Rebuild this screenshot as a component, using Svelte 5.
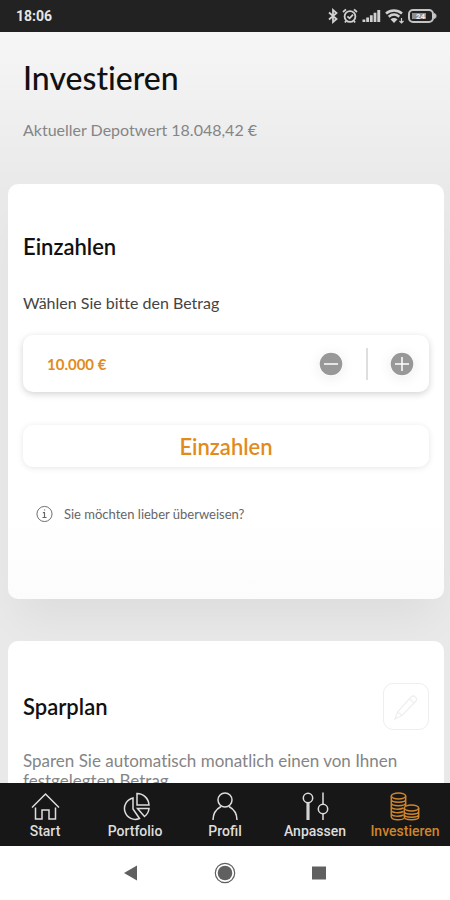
<script lang="ts">
  let amount = $state(10000);

  const tabs = ["Start", "Portfolio", "Profil", "Anpassen", "Investieren"];
  let active = $state("Investieren");

  const format = (n: number) =>
    String(n).replace(/\B(?=(\d{3})+$)/g, ".") + " €";

  function step(by: number) {
    amount = Math.max(0, amount + by);
  }

  function parse(e: Event) {
    const field = e.currentTarget as HTMLInputElement;
    amount = Number(field.value.replace(/\D/g, ""));
    field.value = format(amount);
  }
</script>

<div class="app">
  <header class="status">
    <span>18:06</span>
    <div class="status-icons">
      <svg width="10" height="16" viewBox="0 0 10 16" fill="none" stroke="#d0d0d0" stroke-width="1.8">
        <path d="M1 4.5 8.5 11 5 14v-12L8.500 5 1 11.5" />
      </svg>
      <svg width="16" height="16" viewBox="0 0 16 16" fill="none" stroke="#d0d0d0" stroke-width="1.8">
        <circle cx="8" cy="8.5" r="5.4" />
        <path d="M1 4 4 1.400M15 4l-3-2.600M5.400 8.300l2.200 2 3.400-3.600M4 13l-1 1.600M12 13l1 1.600" />
      </svg>
      <svg width="19" height="14" viewBox="0 0 19 14" fill="#d0d0d0">
        <path d="M.5 10.500h2.800V13H.5zM4.200 8.500H7V13H4.200zM7.900 6.200h2.800V13H7.900zM11.600 3.700h2.800V13h-2.800zM15.300 1h2.900v12h-2.900z" />
      </svg>
      <svg width="19" height="16" viewBox="0 0 19 16" fill="none" stroke="#d0d0d0" stroke-width="2.500">
        <path d="M1 5.500c4.700-4 11.300-4 16 0M3.700 8.700c3.300-2.700 7.300-2.700 10.600 0" />
        <path d="M5.500 11.300c2.300-1.700 4.700-1.700 7 0L9 15z" fill="#d0d0d0" stroke="none" />
        <path d="M16.500 10v5M14.500 13l2 2 2-2" stroke-width="1.200" />
      </svg>
      <svg width="29" height="14" viewBox="0 0 29 14">
        <rect x="1" y="1" width="24" height="12" rx="4" fill="none" stroke="#c4c4c4" stroke-width="2" />
        <path d="M26.500 4.500c2 .5 2 4.500 0 5z" fill="#c4c4c4" stroke="#c4c4c4" />
        <rect x="4" y="4" width="14" height="6" fill="#8c8c8c" />
        <text x="8" y="10">24</text>
      </svg>
    </div>
  </header>

  <main>
    <div class="intro">
      <h1>Investieren</h1>
      <p>Aktueller Depotwert 18.048,42 €</p>
    </div>

    <section class="card deposit">
      <h2>Einzahlen</h2>
      <label for="amount">Wählen Sie bitte den Betrag</label>
      <div class="amount">
        <input id="amount" type="text" inputmode="numeric" value={format(amount)} onchange={parse} />
        <button class="step" aria-label="Betrag verringern" onclick={() => step(-500)}>
          <svg width="24" height="24" viewBox="0 0 24 24">
            <circle cx="12" cy="12" r="11.300" fill="#989898" />
            <path d="M5 12h14" stroke="#fff" stroke-width="1.500" />
          </svg>
        </button>
        <span class="divider"></span>
        <button class="step" aria-label="Betrag erhöhen" onclick={() => step(500)}>
          <svg width="24" height="24" viewBox="0 0 24 24">
            <circle cx="12" cy="12" r="11.300" fill="#989898" />
            <path d="M5 12h14M12 5v14" stroke="#fff" stroke-width="1.500" />
          </svg>
        </button>
      </div>
      <button class="submit">Einzahlen</button>
      <a class="hint" href="#ueberweisen">
        <svg width="17" height="18" viewBox="0 0 18 18" fill="none" stroke="#666">
          <circle cx="9" cy="9" r="8" />
          <path d="M7.300 7.500H9v5M6.800 12.700h4.400M8.500 4.800h1.200" stroke-width="1.200" />
        </svg>
        Sie möchten lieber überweisen?
      </a>
    </section>

    <section class="card plan">
      <div class="plan-head">
        <h2>Sparplan</h2>
        <button class="edit" aria-label="Sparplan bearbeiten">
          <svg width="24" height="26" viewBox="0 0 24 26" fill="none" stroke="#efefef" stroke-width="1.300">
            <path d="M1 25l2.500-7L17 3q2-2 4.200-.2T22 7L8 21.500zM3.500 18 8 21.500M15.500 4.700l4.600 4.300" />
          </svg>
        </button>
      </div>
      <p>Sparen Sie automatisch monatlich einen von Ihnen festgelegten Betrag.</p>
    </section>
  </main>

  <nav class="tabs">
    {#each tabs as tab}
      <button class:active={active === tab} onclick={() => (active = tab)}>
        <svg width="30" height="30" viewBox="0 0 30 30" fill="none" stroke="currentColor" stroke-width="1.500">
          {#if tab === "Start"}
            <path d="M2 16.500 15.500 3 29 16.500M5.500 16.500V28h6.500v-9h7v9h6.500V16.500" />
          {:else if tab === "Portfolio"}
            <path d="M13 7a10.800 10.800 0 1 0 6.500 20.500L13 18z" />
            <path d="M17 2.500V14h12A12 12 0 0 0 17 2.500zM17.500 17.500H29q-.5 5-4.500 8z" />
          {:else if tab === "Profil"}
            <circle cx="15" cy="9" r="7" />
            <path d="M3 29c0-7.500 3.500-11 8-13.500M27 29c0-7.500-3.500-11-8-13.500" />
          {:else if tab === "Anpassen"}
            <circle cx="8" cy="7" r="4.700" />
            <circle cx="23" cy="18" r="4.700" />
            <path d="M7.200 12V29M8.800 12V29M23 1.500v11.700M23 22.800V29" />
          {:else}
            <ellipse cx="8.500" cy="5" rx="7.200" ry="3" />
            <path d="M1.300 5v20.500c0 4 10 4 12.700 2M15.700 5v10M1.300 8.500c0 3.500 14.400 3.500 14.400 0M1.300 12c0 3.500 14.400 3.500 14.400 0M1.300 15.500c0 3 8 3.500 12.200 1.500M1.300 19c0 3 8 3.500 12.200 1.500M1.300 22.500c0 3 8 3.500 12.200 1.500" />
            <ellipse cx="21.500" cy="17" rx="7.200" ry="3" />
            <path d="M14.300 17v9c0 3.500 14.400 3.500 14.400 0v-9M14.300 20.500c0 3.500 14.400 3.500 14.400 0M14.300 23.500c0 3.500 14.400 3.500 14.400 0" />
          {/if}
        </svg>
        {tab}
      </button>
    {/each}
  </nav>

  <footer class="system">
    <button aria-label="Zurück">
      <svg width="24" height="24" viewBox="0 0 24 24"><path d="M5 12 18 4.500v15z" fill="#606060" /></svg>
    </button>
    <button aria-label="Startbildschirm">
      <svg width="24" height="24" viewBox="0 0 24 24">
        <circle cx="12" cy="12" r="9.700" fill="none" stroke="#606060" stroke-width="1.200" />
        <circle cx="12" cy="12" r="7.300" fill="#606060" />
      </svg>
    </button>
    <button aria-label="Letzte Apps">
      <svg width="24" height="24" viewBox="0 0 24 24"><path d="M5 5.500h14v13H5z" fill="#606060" /></svg>
    </button>
  </footer>
</div>

<style>
  :global(body) {
    margin: 0;
  }
  .app {
    display: flex;
    flex-direction: column;
    height: 100vh;
    background: #fff;
    color: #111;
    font-family: Lato, "Liberation Sans", sans-serif;
    font-variant-ligatures: none;
  }
  h1, h2, p {
    margin: 0;
  }
  button {
    padding: 0;
    border: 0;
    background: none;
    font-family: inherit;
    cursor: pointer;
  }
  svg {
    display: block;
    flex-shrink: 0;
  }

  .status {
    display: flex;
    align-items: center;
    justify-content: space-between;
    height: 32px;
    padding: 0 13px 0 16px;
    background: #222;
    color: #e6e6e6;
    font: 700 14px Roboto, sans-serif;
  }
  .status-icons {
    display: flex;
    align-items: center;
    gap: 4px;
  }
  .status-icons text {
    fill: #eee;
    font: 700 8px Roboto, sans-serif;
  }

  main {
    flex: 1;
    min-height: 0;
    overflow: hidden;
    background: linear-gradient(#f6f6f6, #e9e9e9 160px, #e9e9e9);
  }
  .intro {
    padding: 24px 23px 44px;
  }
  h1 {
    font-size: 32px;
    line-height: 44px;
    font-weight: 500;
  }
  .intro p {
    margin-top: 20px;
    color: #858585;
    font-size: 16px;
    line-height: 20px;
  }

  .card {
    margin: 0 6px 42px 8px;
    padding: 0 15px;
    border-radius: 10px;
    background: #fff;
  }
  .deposit {
    display: flex;
    flex-direction: column;
    padding-top: 49px;
    padding-bottom: 75px;
    background: linear-gradient(#fff 80%, #fcfcfc);
    box-shadow: 0 30px 40px -10px rgba(0, 0, 0, 0.05);
  }
  h2 {
    font-size: 22px;
    line-height: 28px;
    font-weight: 600;
  }
  label {
    margin-top: 32px;
    color: #444;
    font-size: 16px;
    line-height: 20px;
  }
  .amount {
    display: flex;
    align-items: center;
    height: 57px;
    margin-top: 22px;
    padding: 0 15px 0 24px;
    border-radius: 10px;
    box-shadow: 0 2px 7px rgba(0, 0, 0, 0.18);
  }
  .amount input {
    flex: 1;
    min-width: 0;
    padding: 0;
    border: 0;
    outline: 0;
    background: none;
    color: #e28b1c;
    font: 700 15px Lato, sans-serif;
  }
  .step {
    border-radius: 50%;
    box-shadow: 0 2px 14px rgba(0, 0, 0, 0.08);
  }
  .divider {
    width: 2px;
    height: 32px;
    margin: 0 22px 0 23px;
    background: #dedede;
  }
  .submit {
    height: 42px;
    margin-top: 33px;
    border-radius: 10px;
    box-shadow: 0 1px 6px rgba(0, 0, 0, 0.1);
    color: #e28b1c;
    font-size: 22px;
    font-weight: 600;
  }
  .hint {
    display: flex;
    align-items: center;
    gap: 11px;
    margin: 37px 13px 0;
    color: #666;
    font-size: 13px;
    line-height: 20px;
    text-decoration: none;
  }

  .plan {
    padding-top: 42px;
  }
  .plan-head {
    display: flex;
    align-items: center;
    justify-content: space-between;
    padding-bottom: 21px;
  }
  .edit {
    display: grid;
    place-items: center;
    width: 46px;
    height: 47px;
    border: 1px solid #eee;
    border-radius: 10px;
  }
  .plan p {
    color: #858585;
    font-size: 17px;
    line-height: 20px;
  }

  .tabs {
    display: grid;
    grid-template-columns: repeat(5, 1fr);
    height: 63px;
    background: #171717;
  }
  .tabs button {
    display: flex;
    flex-direction: column;
    align-items: center;
    gap: 1px;
    padding-top: 8px;
    color: #ddd;
    font: 500 14px/18px Roboto, sans-serif;
  }
  .tabs .active {
    color: #ce842c;
  }

  .system {
    display: flex;
    justify-content: center;
    gap: 70px;
    height: 39px;
    padding-top: 15px;
  }
  .system button {
    height: 24px;
  }
</style>
